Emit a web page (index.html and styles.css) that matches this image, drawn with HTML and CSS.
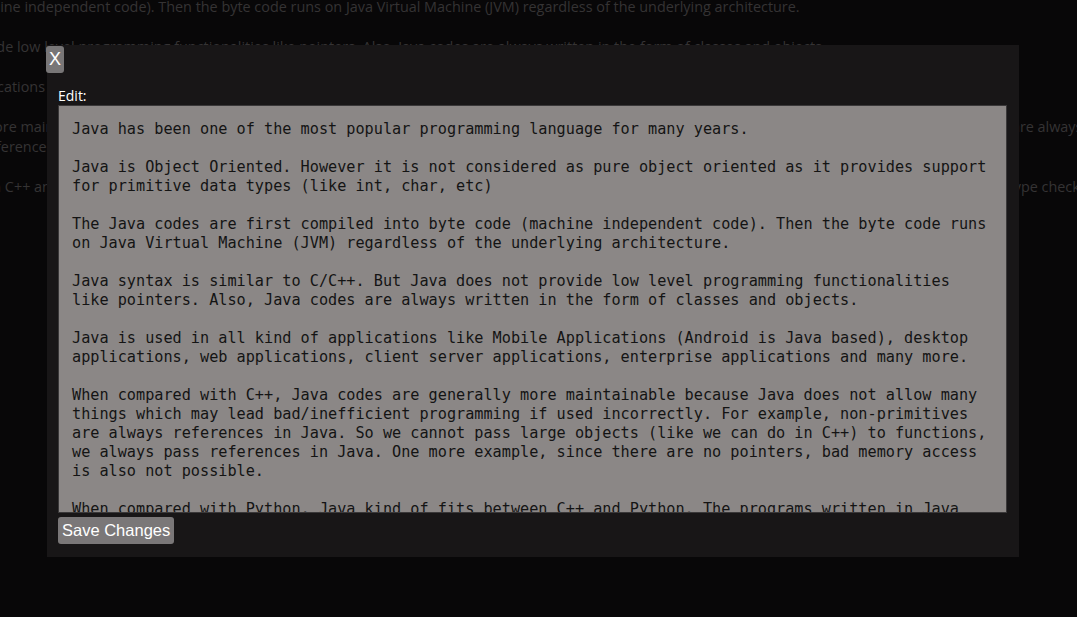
FILE: index.html
```html
<!DOCTYPE html>
<html lang="en">
<head>
<meta charset="utf-8">
<title>Edit</title>
<link rel="stylesheet" href="styles.css">
</head>
<body>
<main class="article">
  <p>The Java codes are first compiled into byte code (machine independent code). Then the byte code runs on Java Virtual Machine (JVM) regardless of the underlying architecture.</p>
  <p>Java syntax is similar to C/C++. But Java does not provide low level programming functionalities like pointers. Also, Java codes are always written in the form of classes and objects.</p>
  <p>Java is used in all kind of applications like Mobile Applications (Android is Java based), desktop applications, web applications, client server applications, enterprise applications and many more.</p>
  <p>When compared with C++, Java codes are generally more maintainable because Java does not allow many things which may lead bad/inefficient programming if used incorrectly. For example, non-primitives are always<span class="wrap-line">references in Java. So we cannot pass large objects (like we can do in C++) to functions, we always pass references in Java.</span></p>
  <p>When compared with Python, Java kind of fits between C++ and Python. The programs written in Java are typically faster than Python programs and slower than C++ programs. Like C++, Java performs static type checking, but Python does not.</p>
</main>

<div class="modal">
  <button class="close-btn" type="button">X</button>
  <label class="edit-label" for="editor">Edit:</label>
  <textarea id="editor" class="editor" spellcheck="false">Java has been one of the most popular programming language for many years.

Java is Object Oriented. However it is not considered as pure object oriented as it provides support for primitive data types (like int, char, etc)

The Java codes are first compiled into byte code (machine independent code). Then the byte code runs on Java Virtual Machine (JVM) regardless of the underlying architecture.

Java syntax is similar to C/C++. But Java does not provide low level programming functionalities like pointers. Also, Java codes are always written in the form of classes and objects.

Java is used in all kind of applications like Mobile Applications (Android is Java based), desktop applications, web applications, client server applications, enterprise applications and many more.

When compared with C++, Java codes are generally more maintainable because Java does not allow many things which may lead bad/inefficient programming if used incorrectly. For example, non-primitives are always references in Java. So we cannot pass large objects (like we can do in C++) to functions, we always pass references in Java. One more example, since there are no pointers, bad memory access is also not possible.

When compared with Python, Java kind of fits between C++ and Python. The programs written in Java are typically faster than Python programs and slower than C++ programs. Like C++, Java does static type checking, but Python does not.</textarea>
  <div class="actions">
    <button class="save-btn" type="button">Save Changes</button>
  </div>
</div>
</body>
</html>
```

FILE: styles.css
```css
html, body {
  margin: 0;
  padding: 0;
}

body {
  background: #080708;
  width: 1077px;
  height: 617px;
  overflow: hidden;
  font-family: "Open Sans", "Noto Sans", sans-serif;
}

.article {
  margin-left: -364px;
  margin-top: -3px;
  color: #353334;
  font-size: 14.4px;
  line-height: 20px;
  white-space: nowrap;
}

.article p {
  margin: 0 0 20px 0;
}

.wrap-line {
  display: block;
  margin-left: 346px;
}

.modal {
  position: absolute;
  left: 47px;
  top: 45px;
  width: 972px;
  height: 512px;
  box-sizing: border-box;
  background: #181617;
  padding: 42px 12px 13px 11px;
  display: flex;
  flex-direction: column;
}

.close-btn {
  position: absolute;
  left: -1px;
  top: 1px;
  width: 18px;
  height: 27px;
  padding: 0;
  border: none;
  border-radius: 3px;
  background: #787677;
  color: #ffffff;
  font-family: "Liberation Sans", Arial, sans-serif;
  font-size: 18px;
  line-height: 27px;
  text-align: center;
}

.edit-label {
  color: #ffffff;
  font-family: "Open Sans", "Noto Sans", sans-serif;
  font-size: 14px;
  line-height: 18px;
  height: 18px;
  display: block;
}

.editor {
  display: block;
  width: 949px;
  height: 408px;
  box-sizing: border-box;
  margin: 0;
  padding: 14px 13px 13px 13px;
  border: 1px solid #3a3839;
  background: #8b8786;
  color: #141414;
  font-family: "DejaVu Sans Mono", monospace;
  font-size: 15.2px;
  line-height: 19px;
  overflow: hidden;
  resize: none;
  outline: none;
}

.actions {
  display: flex;
  padding-top: 4px;
}

.save-btn {
  height: 27px;
  padding: 0 4px;
  border: none;
  border-radius: 3px;
  background: #7a7778;
  color: #ffffff;
  font-family: "Liberation Sans", Arial, sans-serif;
  font-size: 16.5px;
  line-height: 27px;
}
```
